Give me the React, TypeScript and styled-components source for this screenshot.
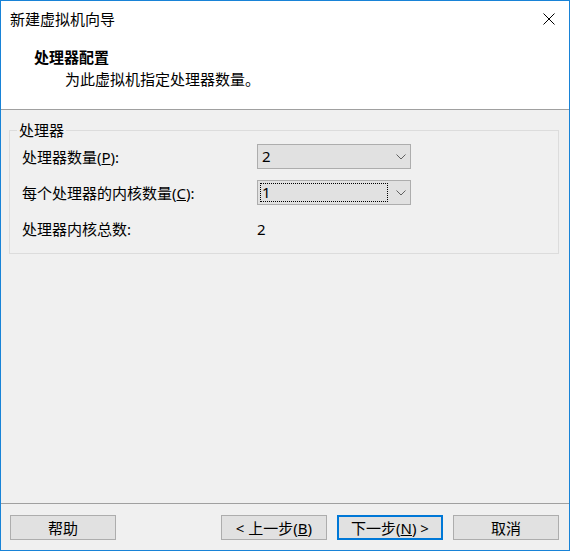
import React from 'react';
import styled, { createGlobalStyle } from 'styled-components';

const GlobalStyle = createGlobalStyle`
  html, body {
    margin: 0;
    padding: 0;
    background: #ffffff;
  }

  body {
    font-family: "Noto Sans", "Noto Sans CJK SC", sans-serif;
    font-size: 15px;
    color: #000000;
  }

  * {
    box-sizing: border-box;
  }
`;

const Window = styled.div`
  width: 570px;
  height: 551px;
  display: flex;
  flex-direction: column;
  border: 1px solid #1883d7;
  background: #f0f0f0;
`;

const TitleBar = styled.div`
  height: 38px;
  display: flex;
  align-items: center;
  justify-content: space-between;
  padding: 0 14px 2px 9px;
  background: #ffffff;
  line-height: 20px;
`;

const CloseButton = styled.div`
  display: flex;
  align-items: center;
  width: 12px;
  height: 12px;
`;

const Header = styled.div`
  height: 71px;
  padding: 7px 0 0 33px;
  background: #ffffff;
  border-bottom: 1px solid #a0a0a0;
`;

const Heading = styled.div`
  font-weight: 700;
  line-height: 22px;
`;

const SubHeading = styled.div`
  margin-left: 31px;
  line-height: 22px;
`;

const Body = styled.div`
  flex: 1;
  padding: 10px 10px 0 8px;
`;

const Group = styled.fieldset`
  margin: 0;
  padding: 0 12px 12px 12px;
  border: 1px solid #dcdcdc;
  display: grid;
  grid-template-columns: 235px 154px;
  row-gap: 11px;
  min-width: 0;
`;

const Legend = styled.legend`
  margin-left: -5px;
  padding: 0 2px;
  line-height: 20px;
  margin-bottom: 4px;
`;

const Label = styled.div`
  height: 25px;
  display: flex;
  align-items: center;
  white-space: nowrap;
`;

const Value = styled.div`
  height: 25px;
  display: flex;
  align-items: center;
`;

const Combo = styled.div<{ $focused?: boolean }>`
  height: 25px;
  display: flex;
  align-items: center;
  justify-content: space-between;
  padding: 0 4px 0 ${p => (p.$focused ? '2px' : '3px')};
  border: 1px solid #adadad;
  background: #e1e1e1;
`;

const ComboText = styled.div<{ $focused?: boolean }>`
  flex: ${p => (p.$focused ? '0 0 128px' : '1')};
  height: ${p => (p.$focused ? '19px' : 'auto')};
  display: flex;
  align-items: center;
  border: ${p => (p.$focused ? '1px dotted #000000' : 'none')};
  padding-left: 1px;
  line-height: 19px;
`;

const Footer = styled.div`
  display: flex;
  align-items: center;
  gap: 10px;
  padding: 11px 10px 10px 9px;
  border-top: 1px solid #a0a0a0;
`;

const Spacer = styled.div`
  flex: 1;
`;

const Button = styled.div<{ $default?: boolean }>`
  width: 106px;
  height: 25px;
  display: flex;
  align-items: center;
  justify-content: center;
  background: #e1e1e1;
  border: ${p => (p.$default ? '2px solid #0078d7' : '1px solid #adadad')};
  white-space: nowrap;
  line-height: 20px;
`;

const Chevron = () => (
  <svg width="10" height="6" viewBox="0 0 10 6">
    <polyline points="0.5,0.5 5,5 9.5,0.5" fill="none" stroke="#606060" strokeWidth="1" />
  </svg>
);

const CloseIcon = () => (
  <svg width="12" height="12" viewBox="0 0 12 12">
    <line x1="0.5" y1="0.5" x2="11.5" y2="11.5" stroke="#000" strokeWidth="1" />
    <line x1="11.5" y1="0.5" x2="0.5" y2="11.5" stroke="#000" strokeWidth="1" />
  </svg>
);

export default function App() {
  return (
    <>
      <GlobalStyle />
      <Window>
        <TitleBar>
          <span>新建虚拟机向导</span>
          <CloseButton>
            <CloseIcon />
          </CloseButton>
        </TitleBar>
        <Header>
          <Heading>处理器配置</Heading>
          <SubHeading>为此虚拟机指定处理器数量。</SubHeading>
        </Header>
        <Body>
          <Group>
            <Legend>处理器</Legend>
            <Label>
              处理器数量(<u>P</u>):
            </Label>
            <Combo>
              <ComboText>2</ComboText>
              <Chevron />
            </Combo>
            <Label>
              每个处理器的内核数量(<u>C</u>):
            </Label>
            <Combo $focused>
              <ComboText $focused>1</ComboText>
              <Chevron />
            </Combo>
            <Label>处理器内核总数:</Label>
            <Value>2</Value>
          </Group>
        </Body>
        <Footer>
          <Button>帮助</Button>
          <Spacer />
          <Button>
            &lt; 上一步(<u>B</u>)
          </Button>
          <Button $default>
            下一步(<u>N</u>) &gt;
          </Button>
          <Button>取消</Button>
        </Footer>
      </Window>
    </>
  );
}
